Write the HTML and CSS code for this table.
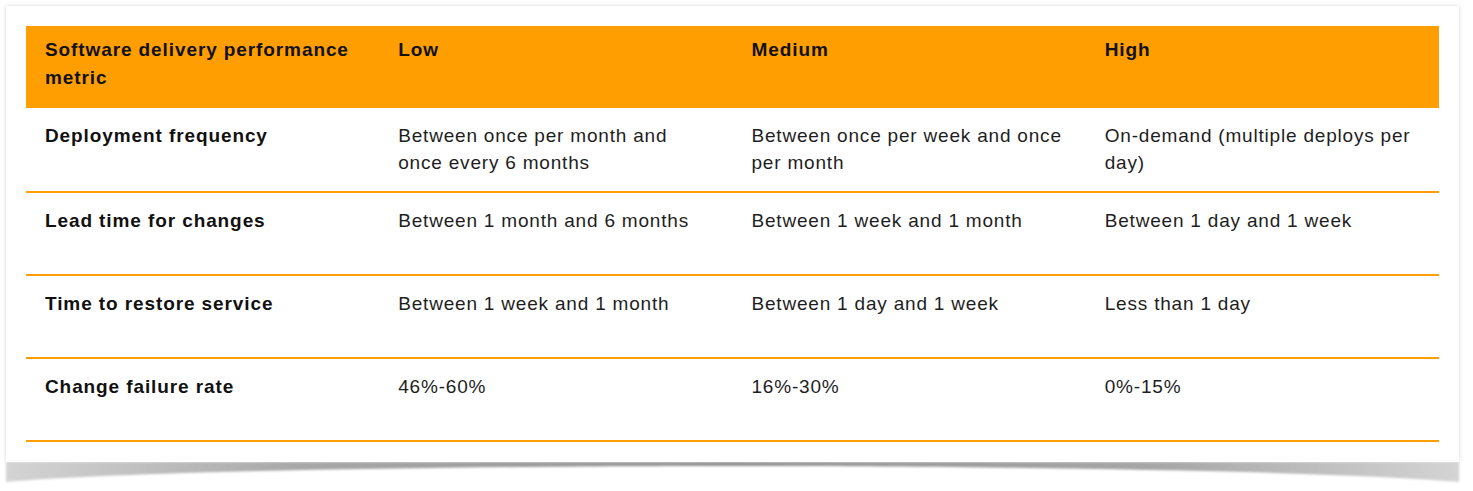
FILE: index.html
```html
<!DOCTYPE html>
<html lang="en">
<head>
<meta charset="utf-8">
<title>Software delivery performance</title>
<link rel="stylesheet" href="styles.css">
</head>
<body>
<div class="page">
  <div class="card">
    <table class="metrics">
      <thead>
        <tr>
          <th>Software delivery performance metric</th>
          <th>Low</th>
          <th>Medium</th>
          <th>High</th>
        </tr>
      </thead>
      <tbody>
        <tr class="first">
          <td class="name">Deployment frequency</td>
          <td>Between once per month and once every 6 months</td>
          <td>Between once per week and once per month</td>
          <td>On-demand (multiple deploys per day)</td>
        </tr>
        <tr>
          <td class="name">Lead time for changes</td>
          <td>Between 1 month and 6 months</td>
          <td>Between 1 week and 1 month</td>
          <td>Between 1 day and 1 week</td>
        </tr>
        <tr>
          <td class="name">Time to restore service</td>
          <td>Between 1 week and 1 month</td>
          <td>Between 1 day and 1 week</td>
          <td>Less than 1 day</td>
        </tr>
        <tr>
          <td class="name">Change failure rate</td>
          <td>46%-60%</td>
          <td>16%-30%</td>
          <td>0%-15%</td>
        </tr>
      </tbody>
    </table>
    <svg class="curl" viewBox="0 0 1457 22" preserveAspectRatio="none" aria-hidden="true">
      <defs>
        <linearGradient id="sg" x1="0" x2="1" y1="0" y2="0">
          <stop offset="0" stop-color="#d4d4d4"/>
          <stop offset="0.2" stop-color="#a8a8a8"/>
          <stop offset="0.5" stop-color="#929292"/>
          <stop offset="0.8" stop-color="#a8a8a8"/>
          <stop offset="1" stop-color="#d4d4d4"/>
        </linearGradient>
        <filter id="sb" x="-0.02" y="-0.5" width="1.04" height="2">
          <feGaussianBlur stdDeviation="1.2"/>
        </filter>
      </defs>
      <path d="M2,0 H1455 V20 C1320,8 950,4 728,4 C506,4 137,8 2,20 Z" fill="url(#sg)" filter="url(#sb)"/>
    </svg>
  </div>
</div>
</body>
</html>
```

FILE: styles.css
```css
html {
  background: #ffffff;
}

body {
  margin: 0;
  padding: 0;
}

.page {
  padding: 6px 14px 30px 6px;
}

.card {
  position: relative;
  z-index: 0;
  width: 1453px;
  box-sizing: border-box;
  padding: 20px;
  background: #ffffff;
  box-shadow: 0 0 4px rgba(0, 0, 0, 0.16);
}

.metrics {
  width: 1413px;
  border-collapse: collapse;
  table-layout: fixed;
  font-family: "Liberation Sans", Arial, sans-serif;
  font-size: 19px;
  line-height: 27px;
  letter-spacing: 0.8px;
  color: #1e1e1e;
}

.metrics th,
.metrics td {
  width: 25%;
  text-align: left;
  vertical-align: top;
  padding: 0 16px 0 19px;
  box-sizing: border-box;
}

.metrics thead tr {
  background: #ff9e00;
  height: 82px;
}

.metrics th {
  font-weight: bold;
  letter-spacing: 0.9px;
  line-height: 28px;
  color: #111111;
  padding-top: 10px;
  height: 82px;
}

.metrics tbody td {
  height: 83px;
  padding-top: 14px;
  border-bottom: 2px solid #ff9e00;
}

.metrics tbody tr.first td {
  height: 84px;
}

.metrics td.name {
  font-weight: bold;
  letter-spacing: 0.9px;
  color: #111111;
}

.curl {
  position: absolute;
  left: -2px;
  top: 100%;
  width: 1457px;
  height: 22px;
  z-index: -1;
}
```
